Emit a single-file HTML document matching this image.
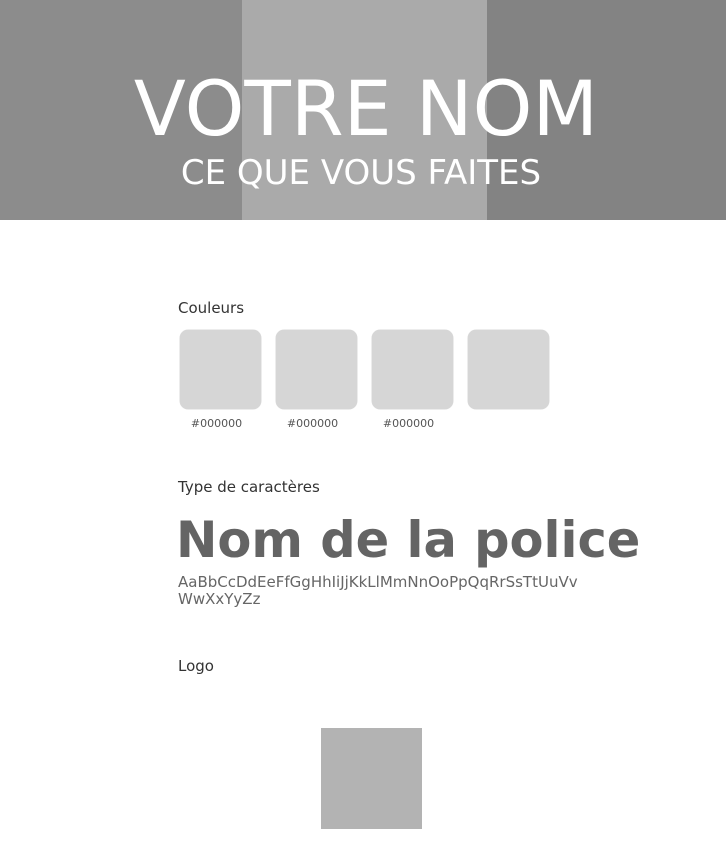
<!DOCTYPE html>
<html><head><meta charset="utf-8"><style>
*{margin:0;padding:0;box-sizing:border-box}
body{width:726px;height:857px;background:#fff;position:relative;overflow:hidden;font-family:"DejaVu Sans","Liberation Sans",sans-serif}
.hdr{position:absolute;left:0;top:0;width:726px;height:220px;background:#8c8c8c}
.mid{position:absolute;left:242px;top:0;width:245px;height:220px;background:#aaaaaa}
.rt{position:absolute;left:487px;top:0;width:239px;height:220px;background:#838383}
.t1{position:absolute;left:0;width:732px;top:64px;text-align:center;color:#fff;font-size:76px;line-height:90px;white-space:nowrap}
.t2{position:absolute;left:0;width:722px;top:151px;text-align:center;color:#fff;font-size:34px;line-height:44px;white-space:nowrap}
.lbl{position:absolute;left:178px;font-size:15px;color:#333}
.sw{position:absolute;top:330px;width:81px;height:79px;background:#d6d6d6;border-radius:8px;border:1px solid #d6d6d6;box-shadow:0 0 0 0.5px rgba(0,0,0,0.15)}
.hx{position:absolute;top:417px;font-size:11px;color:#555;width:81px;text-align:center}
.big{position:absolute;left:176px;top:508px;font-size:49.5px;font-weight:bold;color:#646464;white-space:nowrap;line-height:64px}
.abc{position:absolute;left:178px;top:574px;width:430px;font-size:15px;line-height:17px;color:#666}
.logo{position:absolute;left:321px;top:728px;width:101px;height:101px;background:#b3b3b3}
</style></head><body>
<div class="hdr"></div><div class="mid"></div><div class="rt"></div>
<div class="t1">VOTRE NOM</div>
<div class="t2">CE QUE VOUS FAITES</div>
<div class="lbl" style="top:299px">Couleurs</div>
<div class="sw" style="left:180px"></div>
<div class="sw" style="left:276px"></div>
<div class="sw" style="left:372px"></div>
<div class="sw" style="left:468px"></div>
<div class="hx" style="left:176px">#000000</div>
<div class="hx" style="left:272px">#000000</div>
<div class="hx" style="left:368px">#000000</div>
<div class="lbl" style="top:478px">Type de caractères</div>
<div class="big">Nom de la police</div>
<div class="abc">AaBbCcDdEeFfGgHhIiJjKkLlMmNnOoPpQqRrSsTtUuVv<br>WwXxYyZz</div>
<div class="lbl" style="top:657px">Logo</div>
<div class="logo"></div>
</body></html>
